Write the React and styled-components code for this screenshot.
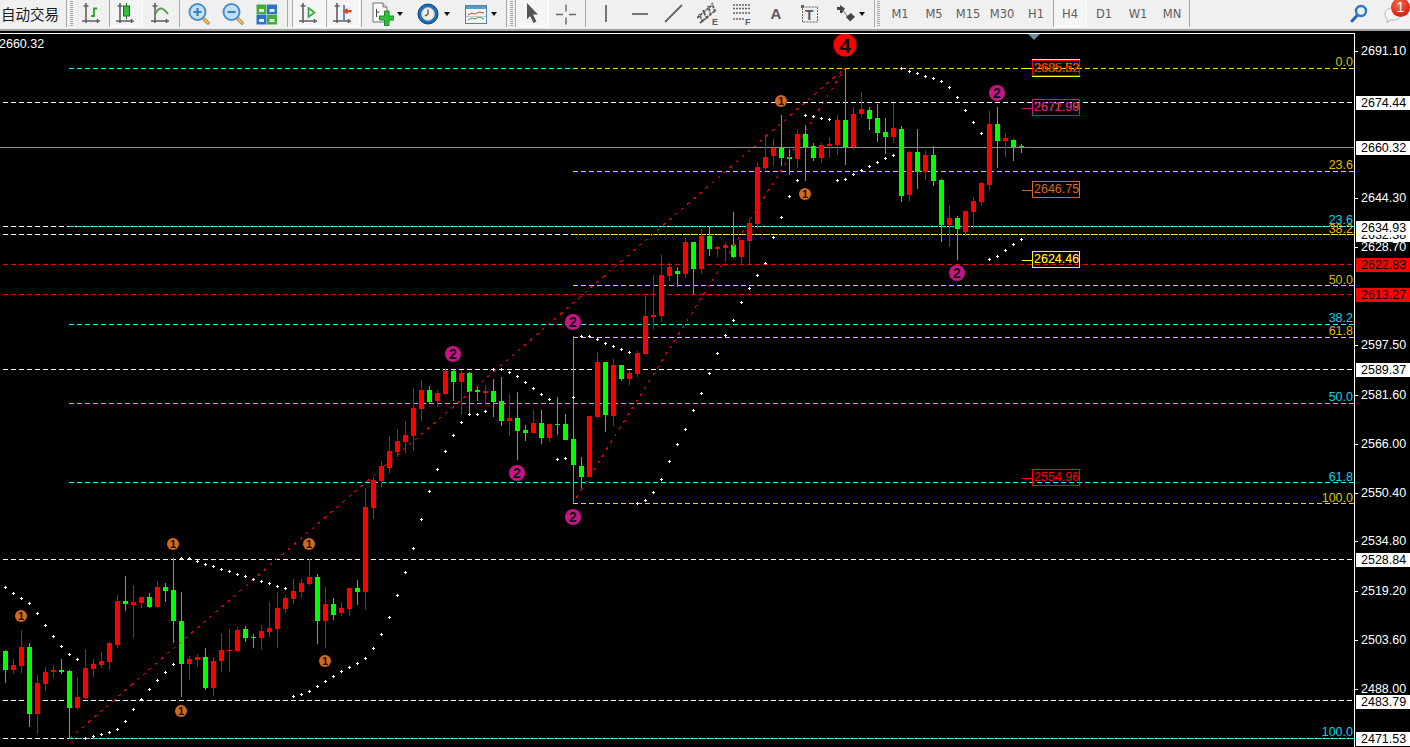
import React from "react";
import styled, { createGlobalStyle, css } from "styled-components";

const GlobalStyle = createGlobalStyle`
	html, body {
		margin: 0;
		padding: 0;
		background: #000;
		overflow: hidden;
	}
`;

const Page = styled.div`
	width: 1410px;
	height: 747px;
	display: flex;
	flex-direction: column;
	background: #000;
	font-family: "Liberation Sans", sans-serif;
	overflow: hidden;
`;

const Toolbar = styled.div`
	height: 31px;
	flex: none;
	box-sizing: border-box;
	display: flex;
	align-items: stretch;
	background: #f0f0f0;
	border-bottom: 2px solid #a0a0a0;
`;

const AutoTrade = styled.div`
	width: 66px;
	flex: none;
	display: flex;
	align-items: center;
	padding: 0 0 3px 1px;
	box-sizing: border-box;
	font-family: "Noto Sans CJK SC", sans-serif;
	font-size: 14.5px;
	color: #1c1c1c;
`;

const Sep = styled.div`
	width: 1px;
	flex: none;
	margin: 0 ${(p) => p.$after || 0}px 2px ${(p) => p.$before || 0}px;
	background: #a8a8a8;
`;

const Grip = styled.div`
	width: 3px;
	flex: none;
	margin: 1px ${(p) => p.$after || 0}px 2px ${(p) => p.$before || 0}px;
	background: repeating-linear-gradient(#a4a4a4 0 1px, transparent 1px 2px);
`;

const activeLook = css`
	background: repeating-conic-gradient(#fbfbfb 0 25%, #efefef 0 50%) 0 0 / 2px 2px;
	box-shadow: inset 1px 0 #a8a8a8, inset -1px 0 #fff, inset 0 -1px #fff;
`;

const ToolButton = styled.div`
	width: ${(p) => p.$w || 34}px;
	flex: none;
	margin-left: ${(p) => p.$before || 0}px;
	margin-bottom: 2px;
	display: flex;
	align-items: center;
	justify-content: center;
	${(p) => p.$active && activeLook}
`;

const DropButton = styled.div`
	width: ${(p) => p.$w}px;
	flex: none;
	box-sizing: border-box;
	padding-left: 8px;
	margin-bottom: 2px;
	display: flex;
	align-items: center;
	gap: ${(p) => p.$gap}px;
`;

const Caret = styled.span`
	width: 0;
	height: 0;
	flex: none;
	border-left: 3.5px solid transparent;
	border-right: 3.5px solid transparent;
	border-top: 4px solid #111;
`;

const TfButton = styled(ToolButton)`
	font-family: "DejaVu Sans", sans-serif;
	font-size: 11.5px;
	color: #5e5e5e;
`;

const ToolEnd = styled.div`
	flex: 1;
	display: flex;
	align-items: center;
	justify-content: flex-end;
	margin-bottom: 2px;
`;

const SearchSlot = styled.div`
	display: flex;
	margin-right: 15px;
`;

const Notify = styled.div`
	position: relative;
	width: 27px;
	height: 29px;
`;

const Badge = styled.span`
	position: absolute;
	top: -1px;
	right: 0;
	width: 19px;
	height: 19px;
	border-radius: 50%;
	background: radial-gradient(circle at 40% 30%, #f56a4c, #d8240f 70%);
	color: #fff;
	font-size: 14px;
	line-height: 19px;
	text-align: center;
`;

const ChartRow = styled.div`
	flex: 1;
	display: flex;
	min-height: 0;
`;

const ChartFrame = styled.div`
	position: relative;
	width: 1355px;
	flex: none;
	box-sizing: border-box;
	margin-top: 2px;
	border-top: 1px solid #fff;
	border-right: 1px solid #fff;
	overflow: hidden;
`;

const ChartSvg = styled.svg`
	display: block;
	font-family: "Liberation Sans", sans-serif;
`;

const Quote = styled.div`
	position: absolute;
	left: -1px;
	top: 3px;
	font-size: 12.5px;
	line-height: 14px;
	color: #fff;
`;

const Pin = styled.div`
	position: absolute;
	left: 1032px;
	top: ${(p) => p.$y - 34}px;
	width: 48px;
	height: ${(p) => p.$h}px;
	box-sizing: border-box;
	border: 1px solid ${(p) => (p.$ghost ? "transparent" : p.$color)};
	padding-left: 1px;
	color: ${(p) => p.$color};
	font-size: 12.5px;
	line-height: ${(p) => p.$h - 2}px;
	white-space: nowrap;
	${(p) =>
		p.$stub &&
		css`
			&::before {
				content: "";
				position: absolute;
				left: -11px;
				top: ${(p.$h - 2) / 2}px;
				width: 10px;
				height: 1px;
				background: ${p.$color};
			}
		`}
`;

const AxisPane = styled.div`
	position: relative;
	flex: 1;
	overflow: hidden;
`;

const AxisLabel = styled.div`
	position: absolute;
	top: ${(p) => p.$y - 7 - 31}px;
	left: 1px;
	right: 0;
	height: 14px;
	box-sizing: border-box;
	padding-left: 5px;
	font-size: 12.5px;
	line-height: 14px;
	color: ${(p) => (p.$bg ? "#000" : "#fff")};
	background: ${(p) => p.$bg || "transparent"};
	${(p) =>
		!p.$bg &&
		css`
			&::before {
				content: "";
				position: absolute;
				left: -1px;
				top: 7px;
				width: 3px;
				height: 1px;
				background: #fff;
			}
		`}
`;

// gray axes shared by the chart type buttons
const Axes = () => (
	<path d="M5 1V21M1 19H19M2.5 4h5M16.5 17v4" stroke="#5f5f5f" strokeWidth="1.6" fill="none" />
);

const Ico = ({ children, w = 22, h = 24 }) => (
	<svg width={w} height={h} viewBox={`0 0 ${w} ${h}`}>
		{children}
	</svg>
);

const BarIcon = () => (
	<Ico>
		<Axes />
		<path d="M10 14h3V6.500h3" stroke="#2ba52b" strokeWidth="1.8" fill="none" />
	</Ico>
);
const CandleIcon = () => (
	<Ico>
		<Axes />
		<path d="M11.500 1v16" stroke="#1c6b2c" strokeWidth="1" />
		<rect x="8.500" y="4" width="6" height="10" fill="#33c13a" stroke="#1c6b2c" />
	</Ico>
);
const LineIcon = () => (
	<Ico>
		<Axes />
		<path d="M5 13C8 5 12 4 18 12" stroke="#5c9c50" strokeWidth="1.8" fill="none" />
	</Ico>
);
const Lens = ({ mark }) => (
	<Ico>
		<path d="M14 15l6 6" stroke="#b08a2c" strokeWidth="3.400" strokeLinecap="round" />
		<path d="M14.500 15.500l5.500 5.500" stroke="#f0d264" strokeWidth="1.400" strokeLinecap="round" />
		<circle cx="9.500" cy="10" r="8" fill="#c4e2f6" stroke="#4a90c8" strokeWidth="2" />
		<path d={mark} stroke="#3d7fb8" strokeWidth="2.200" fill="none" />
	</Ico>
);
const TileIcon = () => (
	<Ico>
		<rect x="0.500" y="2.500" width="10" height="9.500" fill="#46ad3c" />
		<rect x="11" y="2.500" width="10" height="9.500" fill="#2c74c8" />
		<rect x="0.500" y="12.500" width="10" height="10" fill="#2c74c8" />
		<rect x="11" y="12.500" width="10" height="10" fill="#46ad3c" />
		<path d="M3 7h5v3H3zM13.500 7h5v3h-5zM3 17h5v3H3zM13.500 17h5v3h-5z" fill="#dfeee0" />
	</Ico>
);
const ShiftIcon = () => (
	<Ico>
		<Axes />
		<path d="M10.500 6v9l6-4.500z" fill="none" stroke="#36ad3e" strokeWidth="1.800" />
	</Ico>
);
const ScrollIcon = () => (
	<Ico>
		<Axes />
		<path d="M12 3v15" stroke="#2c6fb8" strokeWidth="1.500" />
		<path d="M10.500 9l5-3v2h4v2.500h-4v2z" fill="#d8481e" />
	</Ico>
);
const NewOrderIcon = () => (
	<Ico>
		<path d="M1 1h10l4 4v15H1z" fill="#fafafa" stroke="#707070" />
		<path d="M11 1v4h4" fill="#ddd" stroke="#707070" />
		<path d="M4.500 7v8M4.500 10h3" stroke="#444" fill="none" />
		<path d="M12.500 9h4.500v5h5v4h-5v5.500h-4.500V18h-5v-4h5z" fill="#30c038" stroke="#1b8a28" />
	</Ico>
);
const ClockIcon = () => (
	<Ico>
		<circle cx="11" cy="12" r="10" fill="#1e6db8" stroke="#123f78" />
		<circle cx="11" cy="12" r="6.500" fill="#f4efe3" stroke="#9db8d0" />
		<path d="M11 7.500V12l-3 2" stroke="#444" strokeWidth="1.200" fill="none" />
	</Ico>
);
const PanelIcon = () => (
	<Ico>
		<rect x="0.500" y="3.500" width="21" height="18" fill="#f4f4f4" stroke="#4a86b8" />
		<rect x="1" y="4" width="20" height="3" fill="#5a9ad0" />
		<path d="M3 13l4-2 3 1 4-2 5 1" stroke="#c84a30" fill="none" />
		<path d="M3 18l4-2 3 1 4-2 5 2" stroke="#3ca040" fill="none" />
		<path d="M1 14.500h20" stroke="#b8c4d0" />
	</Ico>
);
const CursorIcon = () => (
	<Ico>
		<path d="M6 1l11 11.500h-5l3.500 7-3 1.500-3.500-7-3 3.500z" fill="#555" />
	</Ico>
);
const CrossIcon = () => (
	<Ico>
		<path d="M1 12.500h7M14 12.500h7M11 2.500v7M11 15.500v7" stroke="#666" strokeWidth="1.400" />
	</Ico>
);
const VLineIcon = () => (
	<Ico>
		<path d="M11 3v17" stroke="#666" strokeWidth="1.800" />
	</Ico>
);
const HLineIcon = () => (
	<Ico>
		<path d="M3 12h16" stroke="#666" strokeWidth="1.800" />
	</Ico>
);
const TrendIcon = () => (
	<Ico>
		<path d="M2 20L19 3" stroke="#666" strokeWidth="1.800" />
	</Ico>
);
const IconLetter = styled.text`
	font-family: "Liberation Sans", sans-serif;
	font-weight: bold;
	fill: #5a5a5a;
`;
const ChannelIcon = () => (
	<Ico>
		<path
			d="M0 16L15 3M3 21L19 8M6 20L2 12M10 17L6 8M14 13L11 4M18 10L15 1"
			stroke="#5e5e5e"
			strokeWidth="1.800"
			strokeDasharray="3 1"
			fill="none"
		/>
		<IconLetter x="15" y="23" fontSize="9">E</IconLetter>
	</Ico>
);
const FiboIcon = () => (
	<Ico>
		<path d="M2 3h17M2 6.500h17M2 11h17M2 17h12" stroke="#666" strokeWidth="1.400" strokeDasharray="2 1" fill="none" />
		<IconLetter x="14" y="23" fontSize="9">F</IconLetter>
	</Ico>
);
const TextIcon = () => (
	<Ico>
		<IconLetter x="5.500" y="17" fontSize="15">A</IconLetter>
	</Ico>
);
const LabelIcon = () => (
	<Ico>
		<rect x="3.500" y="5" width="15" height="15" fill="none" stroke="#666" strokeDasharray="2 1" />
		<IconLetter x="6" y="18" fontSize="14">T</IconLetter>
		<rect x="2" y="3" width="3" height="3" fill="#666" />
	</Ico>
);
const ArrowsIcon = () => (
	<Ico>
		<path d="M2 5h3V3l5 3.500L7 11H5V8H2z" fill="#444" />
		<path d="M7 7l6 8" stroke="#777" />
		<path d="M11 15l5-4 4 4-5 4.500z" fill="#444" />
	</Ico>
);
const SearchIcon = () => (
	<Ico w={18}>
		<path d="M7.500 13L2 19" stroke="#2a66b0" strokeWidth="3" strokeLinecap="round" />
		<circle cx="11" cy="9" r="5" fill="#e8f2fa" stroke="#2f78c4" strokeWidth="2.400" />
	</Ico>
);
const BubbleIcon = () => (
	<svg width="27" height="29" viewBox="0 0 27 29">
		<path d="M2 15c0-4 4-6 8-6s8 2 8 6-4 6-8 6H7l-3 3 .6-3.800C3 19.500 2 17.500 2 15z" fill="#f6f6f6" stroke="#b6b6b6" />
	</svg>
);

const leftTools = [
	[<BarIcon key="b" />, 34],
	[<CandleIcon key="c" />, 34, true],
	[<LineIcon key="l" />, 36],
];
const zoomTools = [
	<Lens key="in" mark="M5.500 10h8M9.500 6v8" />,
	<Lens key="out" mark="M5.500 10h8" />,
	<TileIcon key="t" />,
];
const drawTools = [
	<VLineIcon key="v" />,
	<HLineIcon key="h" />,
	<TrendIcon key="t" />,
	<ChannelIcon key="c" />,
	<FiboIcon key="f" />,
	<TextIcon key="a" />,
	<LabelIcon key="l" />,
];
const timeframes = ["M1", "M5", "M15", "M30", "H1", "H4", "D1", "W1", "MN"];

// rows: colour, wick top, body top, body bottom, wick bottom; values are offsets at 3x from base
const candleGroups = [
	[540, 0, [
		["g", 330, 333, 390, 428], ["r", 357, 375, 390, 402], ["r", 270, 321, 378, 399], ["g", 309, 321, 522, 561],
		["r", 405, 429, 522, 582], ["r", 381, 396, 432, 453], ["r", 375, 390, 396, 414], ["g", 357, 390, 396, 402],
		["g", 390, 393, 504, 597], ["r", 411, 471, 504, 510], ["r", 327, 384, 474, 477], ["r", 357, 372, 387, 411],
		["r", 336, 363, 375, 384], ["r", 306, 309, 366, 390], ["r", 165, 183, 315, 324], ["g", 108, 183, 192, 213],
		["r", 135, 186, 195, 294], ["r", 171, 171, 189, 204], ["g", 159, 171, 201, 204], ["r", 123, 141, 201, 204],
		["g", 129, 141, 153, 186], ["g", 54, 150, 243, 309], ["g", 156, 243, 372, 471], ["r", 348, 357, 372, 420],
		["r", 342, 351, 360, 381], ["g", 324, 351, 444, 450],
	]],
	[470, 26, [
		["r", 561, 573, 654, 678], ["r", 489, 540, 573, 606], ["r", 477, 540, 543, 606], ["r", 471, 480, 543, 546],
		["g", 468, 477, 504, 516], ["g", 492, 501, 504, 534], ["r", 465, 483, 504, 540], ["r", 396, 474, 486, 501],
		["r", 366, 414, 477, 534], ["r", 375, 384, 417, 429], ["r", 327, 363, 387, 402], ["r", 327, 339, 366, 384],
		["r", 267, 321, 342, 348], ["g", 312, 321, 453, 522], ["r", 351, 402, 453, 534], ["g", 384, 402, 435, 450],
		["r", 396, 414, 429, 438], ["r", 354, 354, 417, 438], ["g", 330, 354, 366, 405], ["r", 54, 111, 366, 420],
	]],
	[340, 46, [
		["r", 411, 420, 504, 537], ["r", 363, 378, 423, 441], ["r", 288, 333, 384, 399], ["r", 267, 303, 336, 351],
		["r", 243, 285, 306, 339], ["r", 144, 204, 288, 333], ["r", 120, 150, 207, 243], ["g", 138, 150, 186, 189],
		["r", 150, 159, 183, 201], ["r", 87, 93, 162, 165], ["g", 90, 93, 126, 183], ["r", 90, 99, 126, 225],
		["g", 96, 99, 156, 219], ["g", 141, 150, 156, 183], ["r", 135, 153, 159, 195], ["g", 117, 153, 186, 231],
		["g", 111, 183, 243, 258], ["r", 162, 234, 243, 288], ["g", 156, 234, 273, 360], ["g", 255, 270, 279, 303],
		["r", 210, 249, 279, 279], ["g", 210, 249, 294, 312], ["r", 252, 252, 294, 306], ["g", 171, 252, 255, 285],
		["g", 222, 252, 300, 300],
	]],
	[220, 71, [
		["g", 348, 657, 735, 850], ["g", 711, 738, 771, 810], ["r", 588, 588, 771, 771], ["r", 396, 426, 591, 597],
		["g", 426, 426, 585, 636], ["r", 417, 435, 588, 618], ["g", 435, 435, 477, 483], ["r", 450, 459, 477, 495],
		["r", 393, 399, 462, 471], ["r", 228, 288, 402, 405], ["r", 165, 285, 291, 327], ["r", 105, 165, 288, 306],
		["r", 129, 141, 168, 183], ["g", 141, 153, 162, 201], ["r", 54, 66, 162, 174], ["g", 66, 66, 147, 222],
		["r", 27, 48, 147, 162], ["g", 21, 48, 87, 108], ["r", 78, 81, 87, 111], ["r", 66, 75, 84, 126],
		["g", -24, 75, 111, 114],
	]],
	[30, 92, [
		["r", 630, 630, 681, 705], ["r", 567, 579, 633, 702], ["r", 400, 411, 582, 597], ["r", 312, 381, 414, 420],
		["r", 327, 354, 378, 408], ["g", 255, 354, 384, 408], ["g", 358, 381, 387, 435], ["r", 297, 312, 387, 414],
		["g", 285, 312, 351, 453], ["g", 339, 348, 384, 393], ["r", 339, 345, 384, 399], ["r", 321, 342, 348, 384],
		["r", 255, 270, 345, 375], ["g", 115, 270, 351, 405], ["r", 231, 252, 351, 360], ["r", 186, 237, 252, 261],
		["g", 231, 240, 267, 300], ["g", 222, 264, 309, 336], ["g", 264, 306, 321, 372], ["r", 219, 294, 321, 339],
		["g", 288, 297, 498, 516], ["r", 363, 366, 495, 513], ["g", 297, 366, 426, 477], ["r", 360, 375, 426, 450],
		["g", 348, 375, 453, 468], ["g", 447, 450, 585, 636], ["r", 525, 564, 585, 651], ["g", 558, 564, 597, 690],
		["r", 543, 543, 606, 618], ["r", 501, 513, 546, 597], ["r", 456, 459, 516, 528], ["r", 243, 282, 465, 480],
		["g", 231, 282, 333, 414], ["r", 309, 324, 333, 381], ["g", 327, 330, 351, 393], ["g", 342, 348, 351, 369],
	]],
];

// parabolic SAR runs: base, first candle, offsets at 3x
const sarGroups = [
	[540, 0, [142, 160, 175, 190, 220, 256, 289, 319, 343, 358]],
	[540, 10, [595, 589, 583, 577, 568, 544, 508, 478, 448, 421, 397, 373]],
	[540, 22, [55, 55, 64, 73, 79]],
	[470, 27, [298, 304, 313, 319, 328, 334, 340, 349, 355]],
	[470, 36, [679, 673, 664, 649, 634, 619, 604, 592, 580, 565, 535, 493, 442, 376, 307, 235, 148, 64]],
	[340, 54, [388, 334, 286, 247, 223, 223, 214]],
	[340, 61, [88, 88, 97, 109, 127, 145, 163, 178]],
	[340, 69, [358, 355, 172]],
	[220, 72, [349, 349, 358, 370, 379, 388, 397]],
	[220, 79, [850, 841, 817, 778, 724, 673, 628, 571, 520, 460, 400, 346, 301, 247, 205, 166, 130, 52]],
	[30, 97, [562, 499, 451]],
	[30, 100, [256, 259, 265, 268]],
	[30, 104, [451, 448, 433, 421, 409, 397, 385, 376]],
	[30, 112, [115, 124, 130, 139, 145, 154, 172, 202, 241, 277, 310]],
	[30, 123, [688, 679, 661, 643, 628]],
];

const COLORS = { white: "#ffffff", red: "#ff0000", cyan: "#00ffff", gold: "#ffd700" };

const levels = [
	...[102, 226, 234, 369, 559, 700, 738].map((y) => ({ y, x: 3, c: COLORS.white })),
	...[264, 294].map((y) => ({ y, x: 3, c: COLORS.red })),
	...[68, 226, 324, 403, 482, 738].map((y) => ({ y, x: 69, c: COLORS.cyan })),
	...[68, 171, 234, 285, 337, 503].map((y) => ({ y, x: 573, c: COLORS.gold })),
];

const fibLabels = [
	["0.0", 66, "#c8c800"],
	["23.6", 169, "#e6b800"],
	["23.6", 224, "#00d8e8"],
	["38.2", 233, "#e6b800"],
	["50.0", 284, "#d8b800"],
	["38.2", 322, "#00d8e8"],
	["61.8", 335, "#e6b800"],
	["50.0", 401, "#00d8e8"],
	["61.8", 481, "#00d8e8"],
	["100.0", 502, "#d8c800"],
	["100.0", 736, "#00d8e8"],
];

const pins = [
	{ y: 59, h: 18, color: "#ffff00", text: "2685.52", stub: true },
	{ y: 60, h: 16, color: "#ff0000", text: "2685.62" },
	{ y: 99, h: 17, color: "#d2691e", text: "2671.99", ghost: true },
	{ y: 99, h: 17, color: "#c71585", text: "2672.98", stub: true },
	{ y: 181, h: 17, color: "#d2691e", text: "2646.75", stub: true },
	{ y: 251, h: 17, color: "#c71585", text: "2624.40", ghost: true },
	{ y: 251, h: 17, color: "#ffff00", text: "2624.46", stub: true },
	{ y: 469, h: 17, color: "#ff0000", text: "2554.96", stub: true },
];

const axisLabels = [
	["2691.10", 51], ["2644.30", 198], ["2628.70", 247], ["2597.50", 345], ["2581.60", 395], ["2566.00", 444],
	["2550.40", 493], ["2534.80", 541], ["2519.20", 591], ["2503.60", 640], ["2488.00", 689],
	["2674.44", 103, "#fff"], ["2660.32", 148, "#fff"], ["2632.38", 235, "#fff"], ["2634.93", 228, "#fff"],
	["2622.83", 265, "#f00"], ["2613.27", 295, "#f00"], ["2589.37", 370, "#fff"], ["2528.84", 560, "#fff"],
	["2483.79", 702, "#fff"], ["2471.53", 739, "#fff"],
];

const marks = [
	[21, 616, 1], [173, 544, 1], [181, 711, 1], [309, 544, 1], [325, 661, 1], [781, 101, 1], [805, 194, 1],
	[453, 354, 2], [517, 473, 2], [573, 517, 2], [573, 322, 2], [957, 273, 2], [997, 93, 2],
	[845, 45, 4],
];

const MARK_STYLE = {
	1: { r: 6, fill: "#d2691e", size: 11, dy: 4 },
	2: { r: 8, fill: "#c71585", size: 14, dy: 5 },
	4: { r: 11.500, fill: "#ff0000", size: 21, dy: 7.500 },
};

const Candles = () =>
	candleGroups.flatMap(([base, first, rows]) =>
		rows.map(([c, wt, bt, bb, wb], n) => {
			const i = first + n;
			const y = (v) => Math.round(base + v / 3);
			const fill = c === "g" ? "#00ff00" : "#ff0000";
			const wick = c === "g" ? "#14e014" : "#e80000";
			return (
				<g key={i} shapeRendering="crispEdges">
					<rect x={5 + 8 * i} y={y(wt)} width="1" height={Math.max(y(wb) - y(wt), 1)} fill={wick} />
					<rect x={3 + 8 * i} y={y(bt)} width="5" height={Math.max(y(bb) - y(bt), 1)} fill={fill} />
				</g>
			);
		})
	);

const sarPath = sarGroups
	.flatMap(([base, first, vals]) =>
		vals.map((v, n) => {
			const x = 5 + 8 * (first + n);
			const y = Math.round(base + v / 3);
			return `M${x - 1} ${y}h3v1h-3zM${x} ${y - 1}h1v3h-1z`;
		})
	)
	.join("");

const App = () => {
	return (
		<Page>
			<GlobalStyle />
			<Toolbar>
				<AutoTrade>自动交易</AutoTrade>
				<Sep />
				<Grip $before={3} $after={2} />
				{leftTools.map(([icon, w, active], i) => (
					<ToolButton key={i} $w={w} $active={active}>
						{icon}
					</ToolButton>
				))}
				<Sep $after={2} />
				{zoomTools.map((icon, i) => (
					<ToolButton key={i}>{icon}</ToolButton>
				))}
				<Sep $before={3} $after={4} />
				<ToolButton $active>
					<ShiftIcon />
				</ToolButton>
				<ToolButton $active>
					<ScrollIcon />
				</ToolButton>
				<Sep $before={1} $after={2} />
				<DropButton $w={45} $gap={3}>
					<NewOrderIcon />
					<Caret />
				</DropButton>
				<DropButton $w={48} $gap={5}>
					<ClockIcon />
					<Caret />
				</DropButton>
				<DropButton $w={48} $gap={4}>
					<PanelIcon />
					<Caret />
				</DropButton>
				<Sep $before={1} />
				<Grip $before={3} $after={2} />
				<ToolButton $active>
					<CursorIcon />
				</ToolButton>
				<ToolButton>
					<CrossIcon />
				</ToolButton>
				<Sep $before={2} $after={3} />
				{drawTools.map((icon, i) => (
					<ToolButton key={i}>{icon}</ToolButton>
				))}
				<DropButton $w={45} $gap={2}>
					<ArrowsIcon />
					<Caret />
				</DropButton>
				<Sep $before={2} $after={2} />
				<Grip $after={3} />
				{timeframes.map((tf) => (
					<TfButton key={tf} $active={tf === "H4"}>
						{tf}
					</TfButton>
				))}
				<Sep />
				<ToolEnd>
					<SearchSlot>
						<SearchIcon />
					</SearchSlot>
					<Notify>
						<BubbleIcon />
						<Badge>1</Badge>
					</Notify>
				</ToolEnd>
			</Toolbar>
			<ChartRow>
				<ChartFrame>
					<ChartSvg width="1354" height="713" viewBox="0 34 1354 713">
						{levels.map((l, i) => (
							<line
								key={i}
								x1={l.x}
								x2="1354"
								y1={l.y + 0.5}
								y2={l.y + 0.5}
								stroke={l.c}
								strokeDasharray="5 3"
								shapeRendering="crispEdges"
							/>
						))}
						<line x1="0" x2="1354" y1="147.500" y2="147.500" stroke="#8a9096" shapeRendering="crispEdges" />
						<Candles />
						<path
							d="M70 738L845 68L573 503"
							fill="none"
							stroke="#f00000"
							strokeDasharray="3 5"
							shapeRendering="crispEdges"
						/>
						<path d={sarPath} fill="#fff" shapeRendering="crispEdges" />
						{marks.map(([x, y, n]) => {
							const s = MARK_STYLE[n];
							return (
								<g key={`${x}-${y}`}>
									<circle cx={x} cy={y} r={s.r} fill={s.fill} />
									<text x={x} y={y + s.dy} textAnchor="middle" fontSize={s.size} fontWeight="bold" fill="#111">
										{n}
									</text>
								</g>
							);
						})}
						{fibLabels.map(([t, y, c], i) => (
							<text key={i} x="1353" y={y} textAnchor="end" fontSize="12.500" fill={c}>
								{t}
							</text>
						))}
						<path d="M1028 34h12l-6 6z" fill="#6f8ca0" />
					</ChartSvg>
					<Quote>2660.32</Quote>
					{pins.map((p, i) => (
						<Pin key={i} $y={p.y} $h={p.h} $color={p.color} $stub={p.stub} $ghost={p.ghost}>
							{p.text}
						</Pin>
					))}
				</ChartFrame>
				<AxisPane>
					{axisLabels.map(([t, y, bg]) => (
						<AxisLabel key={t} $y={y} $bg={bg}>
							{t}
						</AxisLabel>
					))}
				</AxisPane>
			</ChartRow>
		</Page>
	);
};

export default App;
